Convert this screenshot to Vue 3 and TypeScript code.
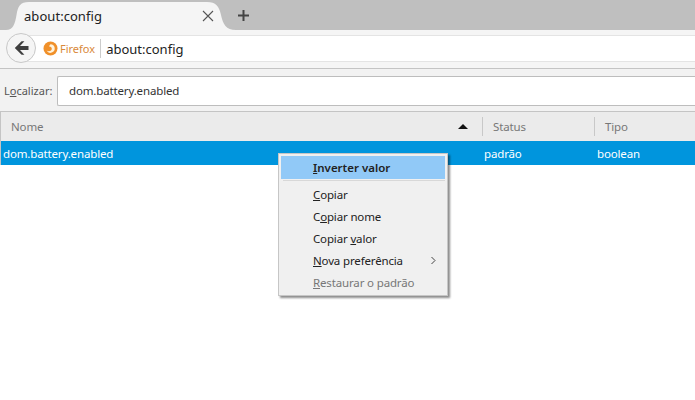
<script setup lang="ts">
interface Item { pre: string; key: string; post: string; cls?: string; arrow?: boolean }
const items: Item[] = [
  { pre: '', key: 'C', post: 'opiar' },
  { pre: 'C', key: 'o', post: 'piar nome' },
  { pre: 'Copiar ', key: 'v', post: 'alor' },
  { pre: '', key: 'N', post: 'ova preferência', arrow: true },
  { pre: '', key: 'R', post: 'estaurar o padrão', cls: 'disabled' },
]
</script>

<template>
  <div class="page">
    <div class="tabstrip">
      <div class="tab">
        <svg class="tab-shape" width="236" height="30" viewBox="0 0 236 30"><path d="M6 30C13 30 15 24 16.500 15C18 6 20 2 29 2H207C216 2 219 6 221 15C223 24 226 30 236 30Z" fill="#f5f5f5"/></svg>
        <span class="tab-title">about:config</span>
        <svg class="tab-close" width="12" height="12" viewBox="0 0 12 12"><path d="M1 1L11 11M11 1L1 11" stroke="#555" stroke-width="1.1" fill="none"/></svg>
      </div>
      <svg class="new-tab" width="13" height="13" viewBox="0 0 13 13"><path d="M6.500 1V12M1 6.500H12" stroke="#444" stroke-width="2" fill="none"/></svg>
    </div>
    <div class="navbar">
      <div class="urlbar">
        <svg class="fx" width="15" height="15" viewBox="0 0 15 15"><circle cx="7.500" cy="7.500" r="7" fill="#f0902a"/><path d="M7.500 3.200A4.300 4.300 0 1 1 3.600 9.500C5 10.600 8.400 10.600 8.800 8C9 6.400 7.600 5.400 6 5.600C6.300 4.600 6.900 3.800 7.500 3.200Z" fill="#fff3dc"/></svg>
        <span class="brand">Firefox</span>
        <span class="url">about:config</span>
      </div>
      <div class="back">
        <svg width="15" height="14" viewBox="0 0 15 14"><path d="M7.600 0.300L0.800 7L7.600 13.700H10.400L6 9H14.500V5H6L10.400 0.300Z" fill="#3f3f3f"/></svg>
      </div>
    </div>
    <div class="findbar">
      <label class="find-label">L<u>o</u>calizar:</label>
      <div class="find-input">dom.battery.enabled</div>
    </div>
    <div class="tree">
      <div class="tree-head">
        <div class="col col-name">Nome<span class="sort"></span></div>
        <div class="col col-status">Status</div>
        <div class="col col-type">Tipo</div>
      </div>
      <div class="tree-row">
        <div class="cell-name">dom.battery.enabled</div>
        <div class="cell-status">padrão</div>
        <div class="cell-type">boolean</div>
      </div>
    </div>
    <div class="menu">
      <div class="menu-item active"><u>I</u>nverter valor</div>
      <div class="sep"></div>
      <div v-for="it in items" :key="it.post" class="menu-item" :class="it.cls">
        {{ it.pre }}<u>{{ it.key }}</u>{{ it.post }}
        <svg v-if="it.arrow" class="arrow" width="6" height="9" viewBox="0 0 6 9"><path d="M1.500 1L5 4.500L1.500 8" stroke="#444" fill="none"/></svg>
      </div>
    </div>
  </div>
</template>

<style>
html, body { margin: 0; background: #fff; }
</style>

<style scoped>
.page {
  position: relative;
  width: 695px;
  height: 400px;
  overflow: hidden;
  font-family: "Noto Sans", "Open Sans", sans-serif;
  font-size: 11.5px;
  letter-spacing: -0.15px;
  color: #222;
  background: #fff;
}
.tabstrip {
  height: 30px;
  background: #bfbfbf;
  display: flex;
  align-items: center;
}
.tab {
  position: relative;
  width: 236px;
  height: 30px;
  flex: none;
  display: flex;
  align-items: center;
}
.tab-shape { position: absolute; left: 0; top: 0; }
.tab-title { position: relative; margin-left: 24px; margin-top: 2px; font-size: 13px; letter-spacing: 0.05px; color: #222; }
.tab-close { position: absolute; left: 202px; top: 10px; }
.new-tab { margin-left: 1px; margin-top: 1px; }
.navbar {
  position: relative;
  height: 38px;
  background: #f5f5f5;
  border-bottom: 1px solid #c4c4c4;
  display: flex;
  align-items: center;
}
.back {
  position: absolute;
  left: 6px;
  top: 3px;
  width: 30px;
  height: 30px;
  box-sizing: border-box;
  border: 1px solid #c8c8c8;
  border-radius: 50%;
  background: #f5f5f5;
  display: flex;
  align-items: center;
  justify-content: center;
}
.urlbar {
  margin-left: 20px;
  flex: 1;
  height: 27px;
  margin-top: -1px;
  background: #fff;
  border-top: 1px solid #e4e4e4;
  border-bottom: 1px solid #e4e4e4;
  box-sizing: border-box;
  display: flex;
  align-items: center;
  padding-left: 23px;
}
.fx { flex: none; }
.brand { margin-left: 2px; color: #d9893a; font-size: 11px; letter-spacing: 0; padding-right: 5px; border-right: 1px solid #ccc; line-height: 19px; }
.url { margin-left: 5px; font-size: 13px; letter-spacing: 0; color: #222; }
.findbar {
  height: 42px;
  background: #f2f2f2;
  display: flex;
  align-items: center;
  padding-left: 4px;
}
.find-label { width: 53px; font-size: 11px; letter-spacing: 0; color: #555; }
.find-input {
  flex: 1;
  height: 30px;
  margin-top: 1px;
  border: 1px solid #bdbdbd;
  border-right: 0;
  border-radius: 2px 0 0 2px;
  background: #fff;
  box-sizing: border-box;
  padding-left: 11px;
  line-height: 27px;
  color: #333;
}
.tree {
  border-top: 1px solid #c4c4c4;
  border-left: 1px solid #c4c4c4;
}
.tree-head {
  height: 29px;
  background: #ebebeb;
  display: flex;
  align-items: center;
  color: #777;
}
.col { height: 19px; line-height: 19px; box-sizing: border-box; }
.col-name { width: 481px; padding-left: 10px; position: relative; }
.sort {
  position: absolute;
  left: 457px;
  top: 7px;
  border-left: 5px solid transparent;
  border-right: 5px solid transparent;
  border-bottom: 5px solid #111;
}
.col-status { width: 112px; padding-left: 10px; border-left: 1px solid #c8c8c8; }
.col-type { flex: 1; padding-left: 10px; border-left: 1px solid #c8c8c8; }
.tree-row {
  height: 24px;
  background: #0095dd;
  display: flex;
  align-items: center;
  color: #fff;
}
.cell-name { width: 483px; padding-left: 2px; box-sizing: border-box; }
.cell-status { width: 113px; }
.menu {
  position: absolute;
  left: 278px;
  top: 153px;
  width: 170px;
  height: 143px;
  box-sizing: border-box;
  background: #f0f0f0;
  border: 1px solid #c6c6c6;
  padding: 2px;
  box-shadow: 2px 2px 2px rgba(0, 0, 0, 0.45);
  color: #222;
}
.menu-item {
  position: relative;
  height: 22px;
  line-height: 21px;
  padding-left: 32px;
}
.menu-item.active { height: 23px; line-height: 23px; background: #91c9f7; font-weight: 600; letter-spacing: 0; }
.menu-item.disabled { color: #777; }
.sep { height: 1px; margin: 1px 0 3px 2px; background: #d8d8d8; }
.arrow { position: absolute; left: 149px; top: 6px; }
</style>
